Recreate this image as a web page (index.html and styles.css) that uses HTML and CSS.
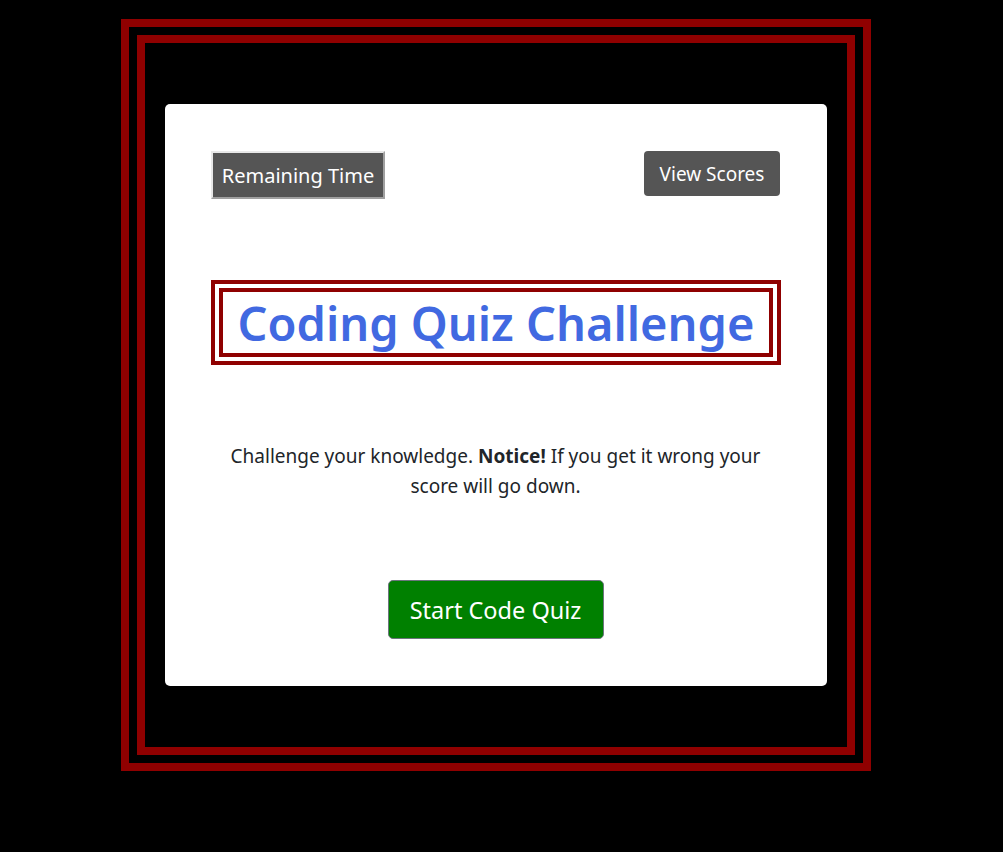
FILE: index.html
```html
<!DOCTYPE html>
<html lang="en">
<head>
<meta charset="utf-8">
<title>Coding Quiz Challenge</title>
<link rel="stylesheet" href="styles.css">
</head>
<body>
<div class="frame">
  <main class="card">
    <header class="topbar">
      <button class="timer">Remaining Time</button>
      <button class="scores">View Scores</button>
    </header>
    <h1 class="title">Coding Quiz Challenge</h1>
    <p class="intro">Challenge your knowledge. <strong>Notice!</strong> If you get it wrong your score will go down.</p>
    <div class="actions">
      <button class="start">Start Code Quiz</button>
    </div>
  </main>
</div>
</body>
</html>
```

FILE: styles.css
```css
* { box-sizing: border-box; }

html, body {
  margin: 0;
  background: #000;
  font-family: "Noto Sans", "Open Sans", sans-serif;
}

body {
  padding: 19px 0 0 121px;
}

.frame {
  width: 750px;
  height: 752px;
  border: 24px double #8f0000;
  padding: 61px 20px;
}

.card {
  background: #fff;
  border-radius: 5px;
  padding: 47px 47px 47px 46px;
  height: 582px;
  display: flex;
  flex-direction: column;
}

.topbar {
  display: flex;
  justify-content: space-between;
  align-items: flex-start;
}

.timer {
  font-family: inherit;
  font-size: 20px;
  color: #fff;
  background: #555;
  border: 2px solid;
  border-color: #e8e8e8 #a0a0a0 #a0a0a0 #e8e8e8;
  height: 48px;
  width: 174px;
  padding: 0;
}

.scores {
  font-family: inherit;
  font-size: 19px;
  color: #fff;
  background: #555;
  border: 0;
  border-radius: 4px;
  height: 45px;
  width: 136px;
  padding: 0;
}

.title {
  margin: 81px -1px 0 0;
  border: 12px double #8f0000;
  color: royalblue;
  font-size: 47px;
  font-weight: 600;
  text-align: center;
  height: 85px;
  line-height: 63px;
  white-space: nowrap;
}

.intro {
  margin: 76px 0 0;
  text-align: center;
  color: #212529;
  font-size: 19px;
  line-height: 30px;
}

.intro strong { font-weight: 700; }

.actions {
  margin-top: auto;
  display: flex;
  justify-content: center;
}

.start {
  font-family: inherit;
  font-size: 23.5px;
  color: #fff;
  background: #008000;
  border: 1px solid #6c757d;
  border-radius: 5px;
  width: 216px;
  height: 59px;
  padding: 0;
}
```
